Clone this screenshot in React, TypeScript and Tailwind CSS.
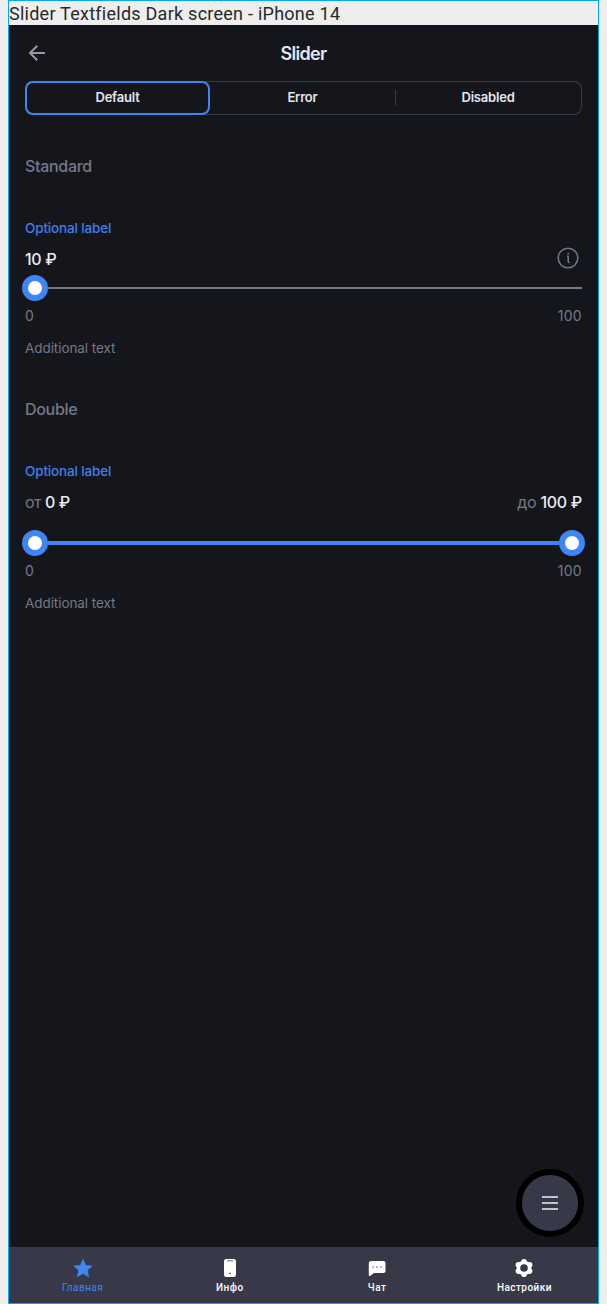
import type { ReactNode } from "react";

const segments = ["Default", "Error", "Disabled"];

function Knob() {
  return <span className="z-10 h-[26px] w-[26px] shrink-0 rounded-full border-[6px] border-[#3f85f5] bg-white" />;
}

function Scale() {
  return (
    <div className="flex h-5 items-center justify-between text-[14px] tracking-[0.3px] text-[#747989]">
      <span>0</span>
      <span>100</span>
    </div>
  );
}

function Title({ children }: { children: ReactNode }) {
  return <h2 className="h-6 text-[16px] leading-6 font-medium tracking-[-0.3px] text-[#747989]">{children}</h2>;
}

function Label() {
  return <div className="mt-[40px] h-5 text-[13.5px] leading-5 font-medium tracking-[-0.15px] text-[#3f7fe8]">Optional label</div>;
}

function Additional() {
  return <div className="mt-[13px] h-5 text-[13.5px] leading-5 tracking-[-0.07px] text-[#747989]">Additional text</div>;
}

function NavItem({ icon, label, active = false }: { icon: ReactNode; label: string; active?: boolean }) {
  return (
    <a className={`flex flex-1 flex-col items-center pt-[9px] ${active ? "font-normal text-[#3f85f5]" : "font-medium text-white"}`}>
      <svg width="24" height="24" viewBox="0 0 24 24" fill="currentColor">{icon}</svg>
      <span className="mt-px font-['Roboto',sans-serif] text-[10px] leading-[14px] tracking-[0.45px]">{label}</span>
    </a>
  );
}

export default function App() {
  return (
    <div className="h-[1304px] w-[607px] bg-[#eeeeee] pl-2 font-['Inter','Noto_Sans',sans-serif]">
      <div className="relative flex h-[1304px] w-[591px] flex-col border border-[#03a9f4] bg-[#15161b]">
        <div className="h-6 bg-[#eeeeee] font-['Roboto',sans-serif] text-[18px] leading-[26px] tracking-[0.25px] whitespace-nowrap text-[#292929]">
          Slider Textfields Dark screen - iPhone 14
        </div>
        <header className="grid h-14 grid-cols-[56px_1fr_56px] items-center">
          <svg className="ml-4" width="24" height="24" viewBox="0 0 24 24" fill="none" stroke="#9697a0" strokeWidth="2">
            <path d="M20 12H5M12.3 4.7 5 12l7.3 7.3" />
          </svg>
          <h1 className="pt-px text-center text-[18px] font-semibold tracking-[-0.7px] text-[#e3e6ef]">Slider</h1>
        </header>
        <main className="flex-1 px-4">
          <div className="grid h-[34px] grid-cols-[185px_185px_1fr] rounded-[8px] shadow-[inset_0_0_0_1px_#383a49]">
            {segments.map((s, i) => (
              <button
                key={s}
                className={`flex items-center justify-center pb-px text-[13px] font-semibold tracking-[-0.2px] text-[#e3e6ef] ${i === 0 ? "rounded-[8px] shadow-[inset_0_0_0_2px_#3f85f5]" : ""}`}
              >
                {i === 2 && <span className="h-4 w-px bg-[#383a49]" />}
                <span className={i === 2 ? "flex-1 pr-[2px]" : "flex-1"}>{s}</span>
              </button>
            ))}
          </div>
          <section className="pt-[39px]">
            <Title>Standard</Title>
            <Label />
            <div className="mt-[7px] flex h-[26px] items-center justify-between">
              <span className="pt-0.5 text-[16px] font-medium tracking-[-0.3px] text-[#e9ebf2]">10 ₽</span>
              <svg className="mr-0.5" width="24" height="24" viewBox="0 0 24 24" fill="none" stroke="#747989" strokeWidth="1.5">
                <circle cx="12" cy="12" r="9.8" />
                <path d="M11 10.3h1.2v5.2c0 .8.4 1 1.5 1" />
                <path d="M11.4 7.5h1.5" strokeWidth="1.5" />
              </svg>
            </div>
            <div className="mt-[4px] -ml-[3px] flex h-[26px] items-center">
              <Knob />
              <span className="h-0.5 flex-1 bg-[#747989]" />
            </div>
            <div className="mt-[4px]"><Scale /></div>
            <Additional />
          </section>
          <section className="pt-[39px]">
            <Title>Double</Title>
            <Label />
            <div className="mt-[9px] flex h-6 items-center justify-between text-[16px] tracking-[-0.3px] text-[#747989]">
              <span className="tracking-[-0.5px]">от <b className="font-medium text-[#e9ebf2]">0 ₽</b></span>
              <span>до <b className="font-medium text-[#e9ebf2]">100 ₽</b></span>
            </div>
            <div className="-mx-[3px] mt-4 flex h-[26px] items-center">
              <Knob />
              <span className="h-1 flex-1 bg-[#3f85f5]" />
              <Knob />
            </div>
            <div className="mt-[4px]"><Scale /></div>
            <Additional />
          </section>
        </main>
        <button className="absolute right-[14px] bottom-[66px] flex h-[68px] w-[68px] items-center justify-center rounded-full border-[6px] border-black bg-[#373948]">
          <svg width="18" height="16" viewBox="0 0 18 16" stroke="#f1f2f4" strokeWidth="1.7">
            <path d="M1 2h16M1 8h16M1 14h16" />
          </svg>
        </button>
        <nav className="flex h-14 bg-[#373948]">
          <NavItem
            active
            label="Главная"
            icon={<path d="m12 3.2 2.7 6 6.5.7-4.8 4.5 1.4 6.5L12 17.6l-5.8 3.3 1.4-6.5-4.8-4.5 6.5-.7Z" stroke="currentColor" strokeWidth=".5" strokeLinejoin="round" />}
          />
          <NavItem
            label="Инфо"
            icon={<><rect x="6" y="3" width="12" height="18" rx="2.3" /><path d="M9 4.7h6" stroke="#92939d" strokeWidth="1.4" /><path d="M11.2 17.3h1.7" stroke="#555764" strokeWidth="1.2" /></>}
          />
          <NavItem
            label="Чат"
            icon={<><path d="M6.3 5h12.2a2 2 0 0 1 2 2v8a2 2 0 0 1-2 2H9l-3.5 2.7c-.8.6-1.7.2-1.7-.8V7.5a2.5 2.5 0 0 1 2.5-2.5Z" /><path d="M7.5 11h1.4m2.4 0h1.4m2.4 0h1.4" stroke="#373948" strokeWidth="1.2" /></>}
          />
          <NavItem
            label="Настройки"
            icon={
              <>
                <circle cx="12" cy="12" r="7.3" />
                <circle cx="12" cy="5.8" r="2.8" />
                <circle cx="17.6" cy="8.9" r="2.8" />
                <circle cx="17.6" cy="15.1" r="2.8" />
                <circle cx="12" cy="18.2" r="2.8" />
                <circle cx="6.4" cy="15.1" r="2.8" />
                <circle cx="6.4" cy="8.9" r="2.8" />
                <circle cx="12" cy="12" r="3.8" fill="#373948" />
              </>
            }
          />
        </nav>
      </div>
    </div>
  );
}
